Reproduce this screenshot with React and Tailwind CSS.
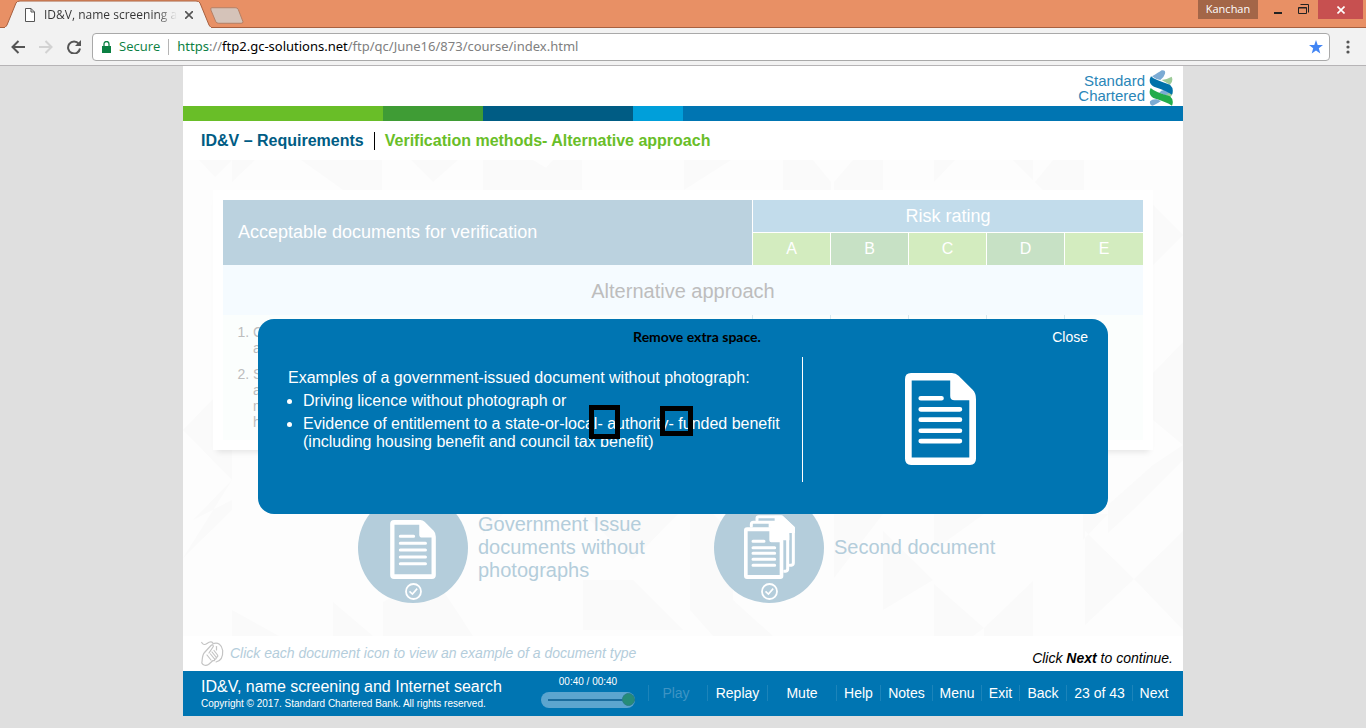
import React from "react";

function DocIcon({ className }) {
  return (
    <svg viewBox="0 0 212 274" className={className} fill="currentColor" aria-hidden="true">
      <path
        fillRule="evenodd"
        d="M18 0H140Q152 0 160 8L202 50Q212 60 212 78V256Q212 274 194 274H18Q0 274 0 256V18Q0 0 18 0ZM20 22V252H192V81H148Q135 81 135 68V22Z"
      />
      <g stroke="currentColor" strokeWidth="14" strokeLinecap="round">
        <path d="M47 75H109M47 108H164M47 139H164M47 172H164M47 203H164" />
      </g>
    </svg>
  );
}

function StackIcon({ className }) {
  return (
    <svg viewBox="0 0 153 192" className={className} aria-hidden="true">
      <g fill="none" stroke="#fff" strokeWidth="9" strokeLinejoin="round" strokeLinecap="round">
        <path d="M39 16V10Q39 5 44 5H112L148 38V144Q148 150 142 151H137" />
        <path d="M22 34V28Q22 22 28 22H94L131 60V162Q131 168 125 169H120" />
      </g>
      <path fill="#fff" d="M92 22V2H116L153 38V54H136V76H112L74 38V18Z" />
      <path fill="#b4cddb" d="M0 48Q0 38 10 38H80L118 76V182Q118 192 108 192H10Q0 192 0 182Z" />
      <path
        fill="#fff"
        fillRule="evenodd"
        d="M9 37H84L118 72V183Q118 192 109 192H9Q0 192 0 183V46Q0 37 9 37ZM11 49V180H107V82H82Q76 82 76 76V49Z"
      />
      <path
        stroke="#fff"
        strokeWidth="9"
        strokeLinecap="round"
        d="M27 79H60M27 98H92M27 115H92M27 133H92M27 151H92"
      />
    </svg>
  );
}

function CheckIcon() {
  return (
    <svg viewBox="0 0 17 17" className="size-[17px] shrink-0" fill="none" stroke="#fff" aria-hidden="true">
      <circle cx="8.5" cy="8.5" r="7.5" strokeWidth="1.8" />
      <path d="M4.5 8.3L7.4 11L12.2 5.6" strokeWidth="1.6" />
    </svg>
  );
}

function BankLogo() {
  return (
    <div className="flex items-center gap-1 pr-2.5">
      <div className="text-right font-['Liberation_Sans',Arial,sans-serif] text-[15px] leading-[15px] text-[#2a86b8]">
        Standard
        <br />
        Chartered
      </div>
      <svg viewBox="0 0 70 108" className="h-9 w-6" aria-hidden="true">
        <path fill="#7cabd4" d="M8 19Q28 7 37 1Q50 0 47 11Q44 22 33 30Q18 28 8 19Z" />
        <path fill="#9ccb98" d="M37 30Q56 27 67 20Q73 34 62 44Q50 38 37 30Z" />
        <path fill="#7cabd4" d="M36 62L52 58L66 72L60 80Q48 76 30 68Z" />
        <path fill="#9ccb98" d="M50 74L68 64Q72 74 63 82Z" />
        <path fill="#0072aa" d="M5 19Q16 30 62 44Q75 56 68 74Q54 63 14 50Q-6 39 5 19Z" />
        <path fill="#22ac4b" d="M4 54Q16 66 62 79Q75 90 68 107Q52 96 12 84Q-5 73 4 54Z" />
        <path fill="#7cabd4" d="M2 94Q8 87 22 88L35 93Q26 100 10 107Q0 106 2 94Z" />
      </svg>
    </div>
  );
}

function MouseIcon() {
  return (
    <svg viewBox="0 0 23 26" className="h-[26px] w-[23px]" fill="none" stroke="#c4c4c4" strokeWidth="1.2" strokeLinecap="round" strokeLinejoin="round" aria-hidden="true">
      <path d="M.7 2.500C2 5 4 5 6 3.500C8 2 10 .5 12 3" />
      <path d="M11.500 4C17 1.500 21 5 21.700 10.500C22 16 20 21 15 22" />
      <path d="M15.500 6.500V10" />
      <path d="M8 13L12.300 6.500C12.500 5 11 4.500 10 5.500L3.500 12.500C1 15 1.500 19 .8 23C2 25.500 5 26 7.500 24.500L12 20.500C13.500 21 14 20 13.500 19L9.500 14" />
      <path d="M13.500 19C15 19.500 15.800 18.500 15 17L11 12M15 17C16.500 17.500 17.200 16.500 16.500 15L13 10.500M6 15L10 20" />
    </svg>
  );
}

function BrowserBar() {
  return (
    <header className="font-['Open_Sans','Noto_Sans',sans-serif]">
      <div className="flex h-7 items-start justify-between border-b border-[#a8603f] bg-[#e89065]">
        <div className="flex items-start">
          <div className="relative h-7 w-[212px]">
            <svg viewBox="0 0 212 28" className="absolute inset-0 h-7 w-[212px]" aria-hidden="true">
              <path d="M0 28H4Q6 27 7 25L16 3Q17 1 20 1H196Q199 1 200 3L209 25Q210 27 212 28Z" fill="#f2f2f2" stroke="#a8603f" />
              <path d="M5 28H211" stroke="#f2f2f2" strokeWidth="2" />
            </svg>
            <div className="relative flex h-7 items-center pt-0.5 pl-[25px]">
              <svg viewBox="0 0 10 14" className="h-3.5 w-2.5" fill="#fff" stroke="#555" aria-hidden="true">
                <path d="M.5.5H6L9.5 4V13.5H.5ZM6 .5V4H9.5" />
              </svg>
              <span className="ml-[9px] bg-gradient-to-r from-[#333] from-85% to-transparent bg-clip-text text-xs whitespace-nowrap text-transparent">
                ID&amp;V, name screening a
              </span>
              <button aria-label="Close tab" className="mr-[19px] ml-auto">
                <svg viewBox="0 0 8 8" className="size-2" stroke="#555" strokeWidth="1.6" aria-hidden="true">
                  <path d="M0 0L8 8M8 0L0 8" />
                </svg>
              </button>
            </div>
          </div>
          <button aria-label="New tab" className="mt-[7px] -ml-0.5">
            <svg viewBox="0 0 35 17" className="h-[17px] w-[34px]" aria-hidden="true">
              <path d="M2 .5H26Q28 .5 29 2L34 15Q34 16.500 32 16.500H9Q7 16.500 6 15L1 3Q0 .5 2 .5Z" fill="#d5c3b9" stroke="#b47e63" />
            </svg>
          </button>
        </div>
        <div className="flex items-start">
          <span className="h-[19px] w-[60px] bg-[#a36648] text-center text-[11px] leading-[18px] text-white">Kanchan</span>
          <button aria-label="Minimize" className="flex h-[19px] w-[30px] items-center justify-center pt-1 pl-2.5">
            <svg viewBox="0 0 8 8" className="size-2" aria-hidden="true">
              <path d="M0 4H8V6H0Z" fill="#222" />
            </svg>
          </button>
          <button aria-label="Restore" className="flex h-[19px] w-[30px] items-center justify-center">
            <svg viewBox="0 0 11 11" className="size-[11px]" fill="none" stroke="#222" aria-hidden="true">
              <path d="M2.500 .5H10.500V8.500M.5 3.500H8.500V9.500H.5ZM.5 4H8.500" />
            </svg>
          </button>
          <button aria-label="Close window" className="mr-[3px] flex h-[19px] w-[45px] items-center justify-center bg-[#c75050]">
            <svg viewBox="0 0 8 8" className="size-2" stroke="#fff" strokeWidth="1.6" aria-hidden="true">
              <path d="M.5 .5L7.500 7.500M7.500 .5L.5 7.500" />
            </svg>
          </button>
        </div>
      </div>
      <div className="flex h-[38px] items-center border-b border-[#b6b4b6] bg-[#f2f2f2] pr-4 pl-[11px]">
        <button aria-label="Back">
          <svg viewBox="0 0 14 14" className="size-3.5" fill="none" stroke="#555" strokeWidth="2" aria-hidden="true">
            <path d="M14 7H1.500M7.500 1L1.500 7L7.500 13" />
          </svg>
        </button>
        <button aria-label="Forward" className="ml-3.5" disabled>
          <svg viewBox="0 0 14 14" className="size-3.5" fill="none" stroke="#d2d2d2" strokeWidth="2" aria-hidden="true">
            <path d="M0 7H12.500M6.500 1L12.500 7L6.500 13" />
          </svg>
        </button>
        <button aria-label="Reload" className="ml-3.5">
          <svg viewBox="0 0 14 14" className="size-3.5" fill="none" stroke="#555" strokeWidth="2" aria-hidden="true">
            <path d="M11.800 3.800A6 6 0 1 0 13 8.500" />
            <path d="M14 0V6H8Z" fill="#555" stroke="none" />
          </svg>
        </button>
        <div className="ml-[11px] flex h-7 flex-1 items-center rounded-sm border border-[#a9a9a9] bg-white pt-px pr-1.5 pl-[9px] text-[13px]">
          <svg viewBox="0 0 9 12" className="h-3 w-[9px]" aria-hidden="true">
            <path d="M0 5H9V12H0Z" fill="#0b8043" />
            <path d="M2 5V3A2.500 2.500 0 0 1 7 3V5" fill="none" stroke="#0b8043" strokeWidth="1.300" />
          </svg>
          <span className="ml-2 text-[#0b8043]">Secure</span>
          <span className="mx-2 h-4 w-px bg-[#b5b5b5]" />
          <div role="textbox" aria-label="Address" className="flex-1 font-['Noto_Sans',sans-serif] whitespace-nowrap text-[#808080]">
            <span className="text-[#0b8043]">https</span>://<span className="text-black">ftp2.gc-solutions.net</span>/ftp/qc/June16/873/course/index.html
          </div>
          <button aria-label="Bookmark">
            <svg viewBox="0 0 14 14" className="size-3.5" fill="#4285f4" aria-hidden="true">
              <path d="M7 0L8.700 5H14L9.800 8.300L11.300 13.500L7 10.400L2.700 13.500L4.200 8.300L0 5H5.300Z" />
            </svg>
          </button>
        </div>
        <button aria-label="Menu" className="ml-4">
          <svg viewBox="0 0 4 14" className="h-3.5 w-1" fill="#555" aria-hidden="true">
            <circle cx="2" cy="2" r="1.600" />
            <circle cx="2" cy="7" r="1.600" />
            <circle cx="2" cy="12" r="1.600" />
          </svg>
        </button>
      </div>
    </header>
  );
}

function Pattern() {
  return (
    <svg viewBox="0 0 1000 476" preserveAspectRatio="none" className="absolute inset-0 h-full w-full" aria-hidden="true">
      <path
        fill="#fafafa"
        d="M16 0H49L32 17ZM49 0H72L49 22ZM118 0H199V30H160L149 22ZM228 0H250V22ZM250 0H275L250 22ZM300 0H350L400 30H300ZM318 0H349V22ZM370 0H399V30H360L350 22ZM501 0H548L501 30ZM600 0H630L648 22V30H600ZM670 0H700V30H651V22ZM751 0H772L751 22ZM830 0H850V20ZM870 0H901V30H860L852 22Z
        M0 270L30 239V290H49V320ZM49 320V340L10 360ZM970 45L1000 75L970 105ZM970 213L1000 182V285L970 260ZM925 345L970 305L1000 285V300L950 350L925 373ZM900 354V380L925 354Z
        M0 398L49 350V320ZM49 450L96 476H49ZM150 442V476H190ZM200 442L250 415L290 476H200ZM300 354H320L300 374ZM400 354H440L495 354L450 400L400 354ZM400 420L450 420L500 470H400ZM507 354L530 354L550 374V476H530L507 450ZM550 440V476H590ZM651 354H700L651 418ZM700 371L750 420L700 450ZM751 354V390L801 354ZM751 424V476H790L801 468ZM801 468L850 421V476H801ZM902 371L951 419L902 465ZM951 419L1000 371V470Z"
      />
    </svg>
  );
}

const ratings = [
  ["A", "bg-[#d3ecbf]", "w-[78px]"],
  ["B", "bg-[#c7e1c5]", "w-[78px]"],
  ["C", "bg-[#d3ecbf]", "w-[78px]"],
  ["D", "bg-[#c7e1c5]", "w-[78px]"],
  ["E", "bg-[#d3ecbf]", "w-[79px]"],
];

function DocumentTable() {
  return (
    <div className="relative mx-[30px] bg-white p-2.5 shadow-[0_6px_6px_-4px_rgba(0,0,0,0.10)]">
      <table className="w-full table-fixed border-separate border-spacing-0 text-lg font-normal">
        <colgroup>
          <col />
          {ratings.map(([name, , width]) => (
            <col key={name} className={width} />
          ))}
        </colgroup>
        <thead className="text-white">
          <tr className="h-8">
            <th rowSpan={2} className="bg-[#bbd2df] p-0 pb-0.5 pl-[15px] text-left font-normal">Acceptable documents for verification</th>
            <th colSpan={5} className="border-l border-white bg-[#c2dceb] p-0 leading-8 font-normal">Risk rating</th>
          </tr>
          <tr className="h-[33px]">
            {ratings.map(([name, color]) => (
              <th key={name} className={`border-t border-l border-white p-0 text-base leading-8 font-normal ${color}`}>{name}</th>
            ))}
          </tr>
        </thead>
        <tbody className="text-[#bdbdbd]">
          <tr className="h-[50px]">
            <td colSpan={6} className="bg-[#f5fbff] p-0 pt-0.5 text-center text-xl">Alternative approach</td>
          </tr>
          <tr className="h-[125px]">
            <td className="bg-[#fbfefd] p-0 pt-[9px] pl-[30px] align-top text-sm leading-4">
              <ol className="flex list-decimal flex-col gap-2.5">
                <li>C<br />a</li>
                <li>S<br />a<br />m<br />h</li>
              </ol>
            </td>
            {ratings.map(([name]) => (
              <td key={name} className="border-l border-[#d8e8ee] bg-[#fbfefd] p-0" />
            ))}
          </tr>
        </tbody>
      </table>
    </div>
  );
}

function Dialog() {
  return (
    <section role="dialog" aria-label="Remove extra space." className="absolute inset-x-[75px] top-[159px] flex h-[195px] flex-col rounded-2xl bg-[#0075b2] px-5 text-white">
      <div className="grid grid-cols-3 pt-2 leading-5">
        <p className="col-start-2 pl-7 text-center font-['Lato',sans-serif] text-sm leading-5 font-bold whitespace-nowrap text-black">Remove extra space.</p>
        <button className="justify-self-end text-sm">Close</button>
      </div>
      <div className="mt-2.5 flex">
        <div className="relative h-[125px] w-[525px] border-r border-white pt-3 pl-2.5 text-base leading-[18px]">
          <p>Examples of a government-issued document without photograph:</p>
          <ul className="mt-[5px] flex list-disc flex-col gap-[5px] pl-[15px]">
            <li>Driving licence without photograph or</li>
            <li>
              Evidence of entitlement to a state-or-local- authority- funded benefit
              <br />
              (including housing benefit and council tax benefit)
            </li>
          </ul>
          <span className="absolute top-12 left-[311px] h-[34px] w-[31px] border-[5px] border-black" />
          <span className="absolute top-[49px] left-[382px] h-[30px] w-[33px] border-[5px] border-black" />
        </div>
        <div className="flex flex-1 justify-center pt-4 pr-2.5">
          <DocIcon className="h-[92px] w-[71px]" />
        </div>
      </div>
    </section>
  );
}

function DocumentButton({ icon, children }) {
  return (
    <button className="flex w-[356px] items-center gap-2.5 text-left">
      <span className="flex size-[110px] shrink-0 flex-col items-center justify-end gap-1 rounded-full bg-[#b4cddb] pb-[3px] text-white">
        {icon}
        <CheckIcon />
      </span>
      <span className="w-[190px] pb-0.5 text-xl leading-[23px] text-[#b4cddb]">{children}</span>
    </button>
  );
}

const controls = [
  ["Play", "w-[59px] pr-1 text-[#3e94c4]"],
  ["Replay", "w-[60px]"],
  ["Mute", "w-[69px]"],
  ["Help", "w-11"],
  ["Notes", "w-[52px]"],
  ["Menu", "w-[49px]"],
  ["Exit", "w-[38px]"],
  ["Back", "w-[47px]"],
  ["23 of 43", "w-[66px]"],
  ["Next", "w-[43px]"],
];

function Footer() {
  return (
    <footer className="flex h-[45px] items-center bg-[#0075b2] pr-2 pl-[18px] text-white">
      <div className="flex-1 whitespace-nowrap">
        <p className="text-base leading-5">ID&amp;V, name screening and Internet search</p>
        <p className="text-[10px] leading-[14px]">Copyright © 2017. Standard Chartered Bank. All rights reserved.</p>
      </div>
      <div className="mr-[13px] flex w-[94px] flex-col gap-1 pb-1">
        <label htmlFor="progress" className="text-center text-[10px] leading-3">00:40 / 00:40</label>
        <div className="flex h-4 items-center rounded-lg bg-[#5ca5cf] pl-[7px]">
          <input
            id="progress"
            type="range"
            defaultValue="100"
            className="h-0.5 w-full appearance-none bg-[#1b6c9d] [&::-webkit-slider-thumb]:size-[13px] [&::-webkit-slider-thumb]:appearance-none [&::-webkit-slider-thumb]:rounded-full [&::-webkit-slider-thumb]:border [&::-webkit-slider-thumb]:border-[#2a7f86] [&::-webkit-slider-thumb]:bg-[#268c78]"
          />
        </div>
      </div>
      <nav className="flex pb-0.5 text-sm">
        {controls.map(([name, style]) =>
          name === "23 of 43" ? (
            <span key={name} className={`h-4 border-l border-[#1c84ba] text-center leading-4 ${style}`}>{name}</span>
          ) : (
            <button key={name} className={`h-4 border-l border-[#1c84ba] text-center leading-4 ${style}`}>{name}</button>
          )
        )}
      </nav>
    </footer>
  );
}

export default function App() {
  return (
    <div className="min-h-screen bg-[#dfdfdf]">
      <BrowserBar />
      <main className="mx-auto w-full max-w-[1000px] bg-white font-['Liberation_Sans',Arial,sans-serif]">
        <div className="flex h-10 items-center justify-end pt-1">
          <BankLogo />
        </div>
        <div className="flex h-[15px] bg-[#0075b2]">
          <span className="w-1/5 bg-[#69be28]" />
          <span className="w-1/10 bg-[#3f9c35]" />
          <span className="w-[15%] bg-[#005c84]" />
          <span className="w-1/20 bg-[#009fda]" />
        </div>
        <h1 className="flex h-[39px] items-center pl-[18px] text-base font-bold">
          <span className="text-[#005c84]">ID&amp;V – Requirements</span>
          <span className="mx-2.5 h-[18px] w-px bg-black" />
          <span className="text-[#69be28]">Verification methods- Alternative approach</span>
        </h1>
        <div className="relative h-[476px] bg-[#fdfdfd] pt-[30px]">
          <Pattern />
          <DocumentTable />
          <div className="relative mt-[43px] flex justify-center pl-[62px]">
            <DocumentButton icon={<DocIcon className="h-[59px] w-[46px]" />}>Government Issue documents without photographs</DocumentButton>
            <DocumentButton icon={<StackIcon className="h-16 w-[51px]" />}>Second document</DocumentButton>
          </div>
          <Dialog />
        </div>
        <div className="flex h-[35px] justify-between pr-2.5 pl-[18px] text-sm italic">
          <p className="flex items-center gap-1.5 pb-0.5 text-[#b4cddb]">
            <MouseIcon />
            Click each document icon to view an example of a document type
          </p>
          <p className="pt-3 leading-5 text-black">
            Click <b>Next</b> to continue.
          </p>
        </div>
        <Footer />
      </main>
    </div>
  );
}
